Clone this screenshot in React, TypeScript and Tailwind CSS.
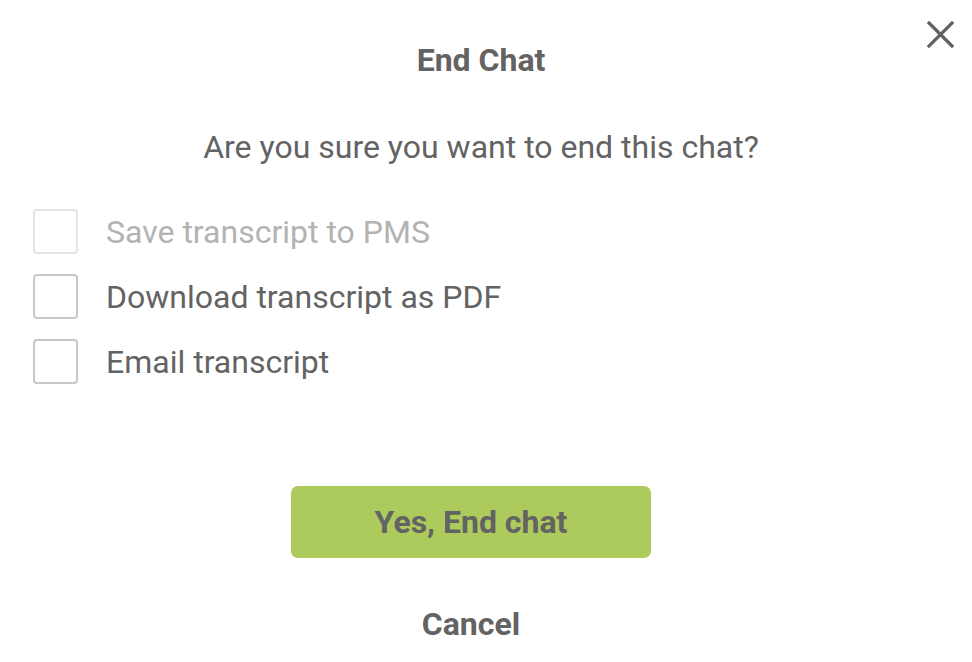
import { useState } from "react";

const options = [
  { id: "pms", label: "Save transcript to PMS", disabled: true },
  { id: "pdf", label: "Download transcript as PDF", disabled: false },
  { id: "email", label: "Email transcript", disabled: false },
];

export default function App() {
  const [checked, setChecked] = useState<Record<string, boolean>>({});

  return (
    <div className="relative w-[972px] h-[662px] bg-white text-[#636363] font-['Roboto',sans-serif]">
      {/* close */}
      <button className="absolute top-[21px] right-[18px] w-[27px] h-[27px] flex items-center justify-center">
        <svg width="27" height="27" viewBox="0 0 27 27">
          <path d="M2 2 L25 25 M25 2 L2 25" stroke="#616161" strokeWidth="3.2" strokeLinecap="square" />
        </svg>
      </button>

      <div className="flex flex-col pt-[44px] pr-[10px]">
        <h1 className="text-center text-[32px] leading-[32px] font-bold">End Chat</h1>
        <p className="text-center text-[32px] leading-[32px] mt-[55px]">
          Are you sure you want to end this chat?
        </p>

        <div className="flex flex-col gap-[20px] mt-[46px] pl-[33px]">
          {options.map((o) => (
            <label
              key={o.id}
              className={`flex items-center gap-[28px] ${o.disabled ? "text-[#b3b3b3]" : "text-[#636363]"}`}
            >
              <input
                type="checkbox"
                disabled={o.disabled}
                checked={!!checked[o.id]}
                onChange={() => setChecked({ ...checked, [o.id]: !checked[o.id] })}
                className={`appearance-none w-[45px] h-[45px] rounded-[4px] border-2 bg-white ${
                  o.disabled ? "border-[#e4e4e4]" : "border-[#c8c8c8]"
                }`}
              />
              <span className="text-[32px] leading-[32px]">{o.label}</span>
            </label>
          ))}
        </div>
      </div>

      <div className="flex flex-col items-center pr-[30px] mt-[102px]">
        <button className="w-[360px] h-[72px] rounded-[7px] bg-[#adcb5c] text-[32px] font-bold text-[#636363]">
          Yes, End chat
        </button>
        <button className="mt-[50px] text-[32px] leading-[32px] font-bold text-[#636363]">Cancel</button>
      </div>
    </div>
  );
}
